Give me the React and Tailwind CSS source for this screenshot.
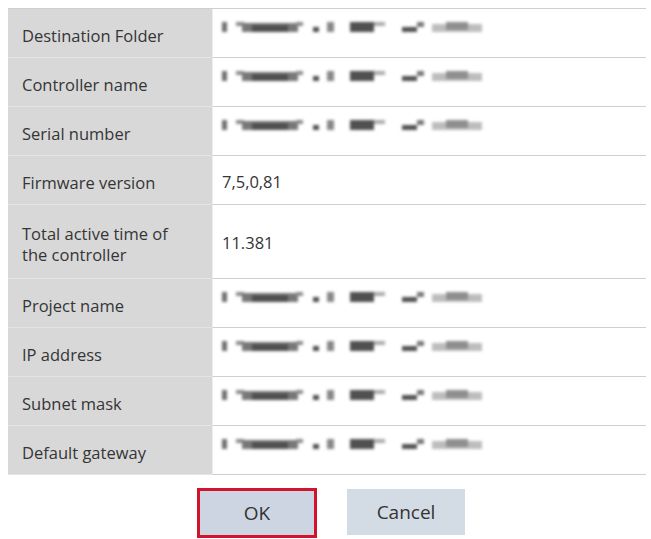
import React from 'react'

// Blurred placeholder used for masked values; offsets are relative to the value start
const maskPieces = [
    { left: 0, width: 5, top: 0, height: 10, tone: 'bg-[#6e6e6e]' },
    { left: 14, width: 8, top: 0, height: 4, tone: 'bg-[#8a8a8a]' },
    { left: 20, width: 56, top: 1, height: 9, tone: 'bg-[#777]' },
    { left: 30, width: 36, top: 3, height: 7, tone: 'bg-[#505050]' },
    { left: 74, width: 7, top: 0, height: 4, tone: 'bg-[#8a8a8a]' },
    { left: 91, width: 6, top: 5, height: 5, tone: 'bg-[#505050]' },
    { left: 105, width: 7, top: 0, height: 10, tone: 'bg-[#888]' },
    { left: 128, width: 24, top: 0, height: 10, tone: 'bg-[#505050]' },
    { left: 152, width: 11, top: 0, height: 4, tone: 'bg-[#aaa]' },
    { left: 180, width: 15, top: 5, height: 5, tone: 'bg-[#505050]' },
    { left: 195, width: 7, top: 0, height: 5, tone: 'bg-[#777]' },
    { left: 210, width: 50, top: 2, height: 8, tone: 'bg-[#bdbdbd]' },
    { left: 224, width: 22, top: 0, height: 8, tone: 'bg-[#8e8e8e]' },
]

function Masked() {
    return (
        <div className="relative h-[11px] w-[262px] blur-[1.4px]">
            {maskPieces.map((p, i) => (
                <span
                    key={i}
                    className={`absolute ${p.tone}`}
                    style={{ left: p.left, width: p.width, top: p.top, height: p.height }}
                />
            ))}
        </div>
    )
}

const rows = [
    { label: 'Destination Folder', masked: true },
    { label: 'Controller name', masked: true },
    { label: 'Serial number', masked: true },
    { label: 'Firmware version', value: '7,5,0,81' },
    { label: ['Total active time of', 'the controller'], value: '11.381', tall: true },
    { label: 'Project name', masked: true },
    { label: 'IP address', masked: true },
    { label: 'Subnet mask', masked: true },
    { label: 'Default gateway', masked: true },
]

function InfoRow({ row }) {
    const height = row.tall ? 'h-[74px]' : 'h-[49px]'
    return (
        <div className={`flex ${height}`}>
            <div className="w-[204px] shrink-0 bg-[#d8d8d8] border-b border-[#e4e4e4] pl-[14px] pt-[4px] flex flex-col justify-center leading-[21px]">
                {Array.isArray(row.label)
                    ? row.label.map(line => <span key={line}>{line}</span>)
                    : row.label}
            </div>
            <div className="flex-1 border-l border-[#ececec] border-b border-b-[#cfcfcf] pl-[9px]">
                {row.masked ? (
                    <div className="pt-[13px]">
                        <Masked />
                    </div>
                ) : (
                    <div className="h-full flex items-center pt-[4px]">{row.value}</div>
                )}
            </div>
        </div>
    )
}

export default function App() {
    return (
        <div
            className="w-[651px] h-[539px] bg-white text-[16.5px] text-[#353535] overflow-hidden"
            style={{ fontFamily: '"Open Sans", "Noto Sans", sans-serif' }}
        >
            <div className="pt-[8px] pl-[8px] pr-[5px]">
                <div className="border-t border-[#cfcfcf]">
                    {rows.map(row => (
                        <InfoRow key={String(row.label)} row={row} />
                    ))}
                </div>
            </div>

            <div className="flex items-start gap-[30px] ml-[197px] mt-[13px]">
                <button className="w-[120px] h-[50px] border-[3px] border-[#d2132e] bg-[#ccd5e1] text-[19px] text-[#333]">
                    OK
                </button>
                <button className="w-[118px] h-[46px] mt-px bg-[#d3dbe4] text-[19px] text-[#333]">
                    Cancel
                </button>
            </div>
        </div>
    )
}
